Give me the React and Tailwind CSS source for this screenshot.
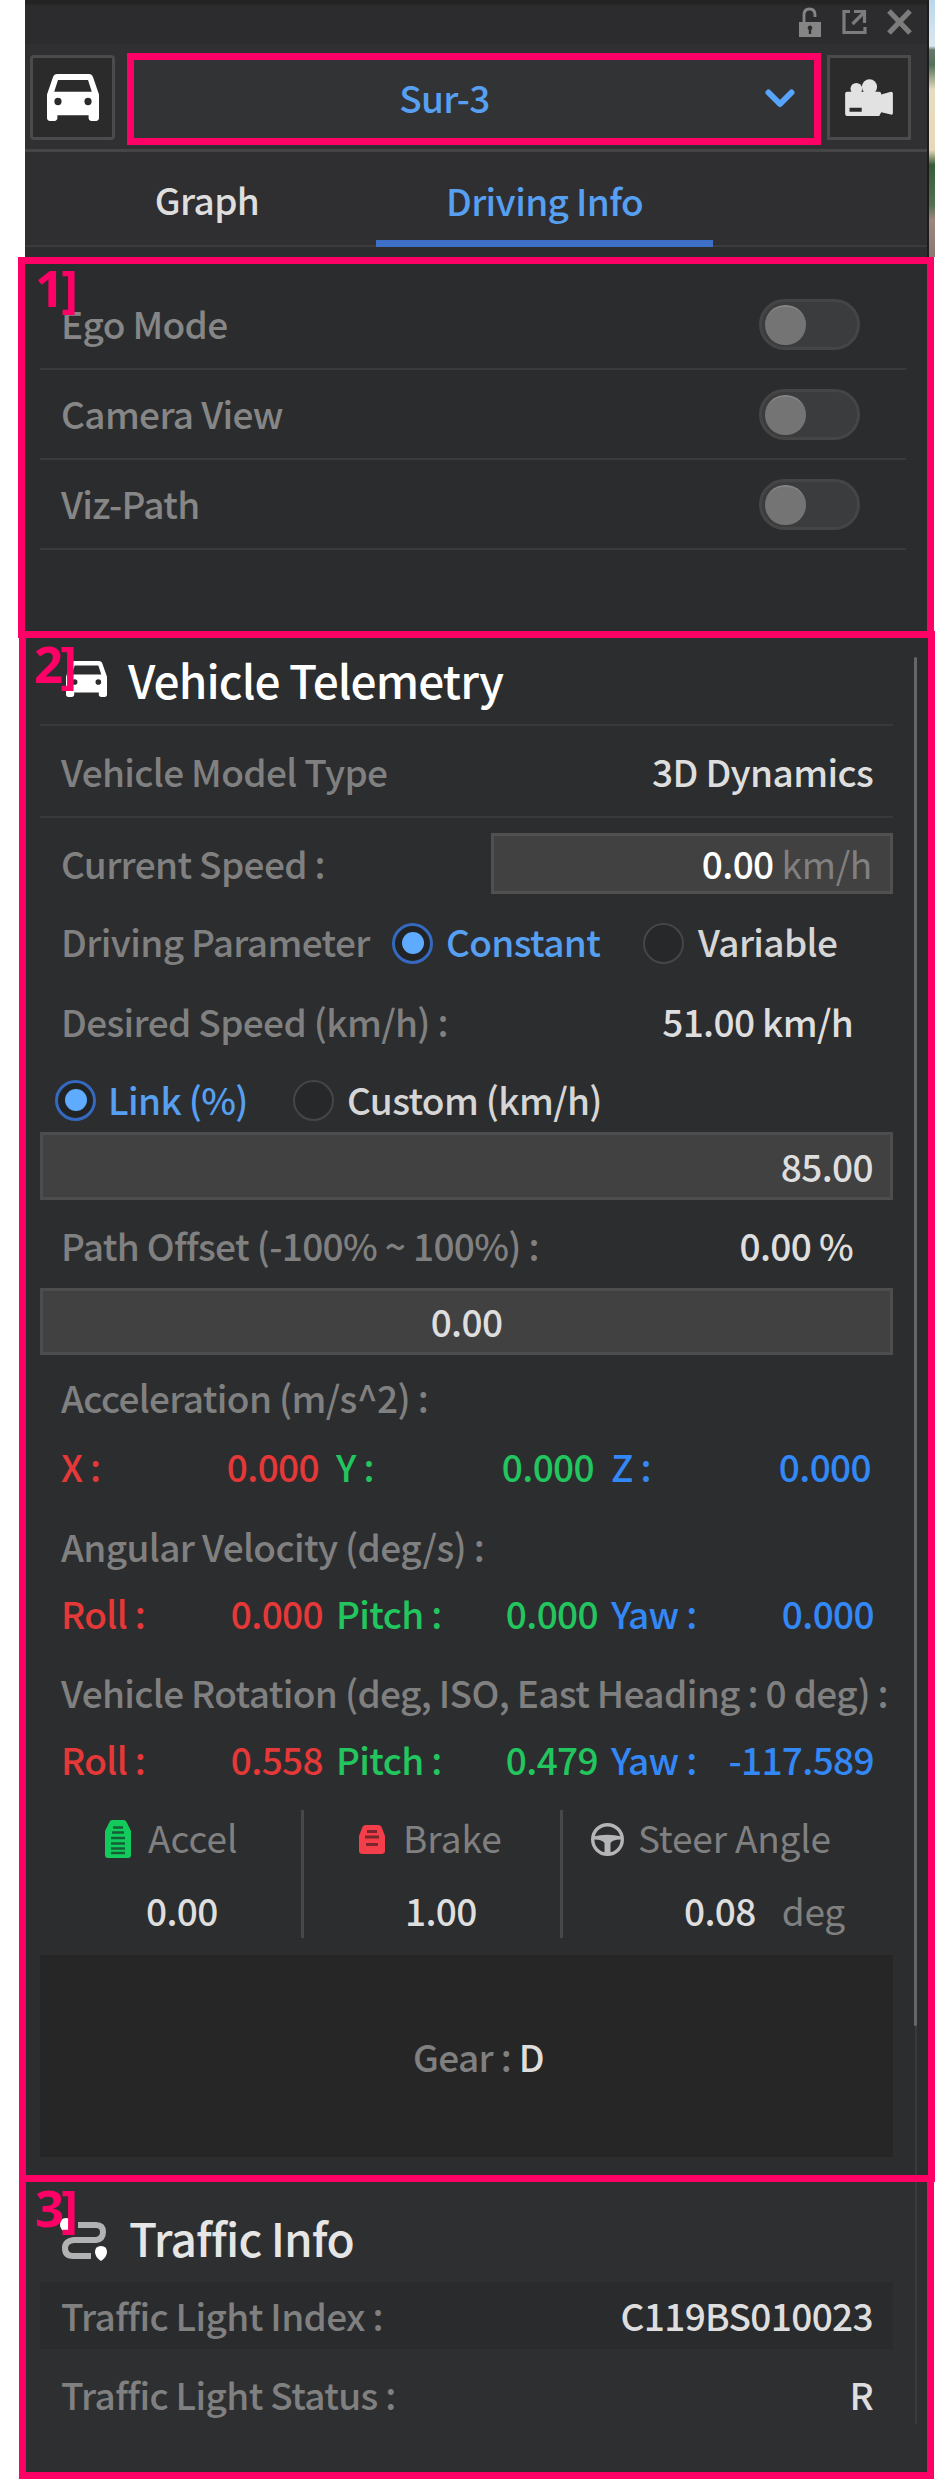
const F = "font-['Noto_Sans_CJK_KR','Noto_Sans_CJK_JP',sans-serif]";

function T({ className = "", children }) {
  return <span className={`whitespace-pre pb-[4px] leading-[48px] ${className}`}>{children}</span>;
}

function Car({ className }) {
  return (
    <svg className={className} viewBox="3 5 18 16" preserveAspectRatio="none" fill="currentColor">
      <path fillRule="evenodd" d="M18.92 6.01C18.72 5.42 18.16 5 17.5 5h-11c-.66 0-1.21.42-1.42 1.01L3 12v8c0 .55.45 1 1 1h1.600c.55 0 1-.45 1-1v-1h10.800v1c0 .55.45 1 1 1h1.600c.55 0 1-.45 1-1v-8l-2.08-5.99zM6.8 15.600a1.250 1.250 0 1 1 0-2.500 1.250 1.250 0 0 1 0 2.500zm10.400 0a1.250 1.250 0 1 1 0-2.500 1.250 1.250 0 0 1 0 2.500zM5.500 11l1.300-4h10.400L18.500 11H5.500z" />
    </svg>
  );
}

function Camera({ className }) {
  return (
    <svg className={className} viewBox="0 0 50 39" fill="currentColor">
      <circle cx="25" cy="8" r="7.800" />
      <circle cx="11.500" cy="10" r="6" />
      <path fillRule="evenodd" d="M2 13H35Q37 13 37 16L47 13Q49 13 49 15V35Q49 37 47 36.500L37 34L35 38H2Q0 38 0 36V15Q0 13 2 13ZM4.500 29.500V33.500H17V29.500Z" />
    </svg>
  );
}

function Unlock() {
  return (
    <svg className="h-[31px] w-[24px]" viewBox="0 0 24 31">
      <path d="M6 16V8Q6 2 11.500 2Q17 2 17 8V10" fill="none" stroke="#858585" strokeWidth="2.800" />
      <path fillRule="evenodd" fill="#858585" d="M1 15H23V30H1ZM12 18.500a2.500 2.500 0 0 0-1.200 4.600V27h2.400V23.100a2.500 2.500 0 0 0-1.200-4.600Z" />
    </svg>
  );
}

function External() {
  return (
    <svg className="h-[26px] w-[25px]" viewBox="0 0 25 26" fill="none" stroke="#7c7c7c" strokeWidth="3.200">
      <path d="M8 2.500H2V23.500H23V18M12 2.500H22.500V14M22 3.500L10.500 15" />
    </svg>
  );
}

function Close() {
  return (
    <svg className="h-[26px] w-[25px]" viewBox="0 0 25 26" fill="none" stroke="#7c7c7c" strokeWidth="5.200">
      <path d="M2 2L23 24M23 2L2 24" />
    </svg>
  );
}

function Wheel() {
  return (
    <svg className="h-[35px] w-[35px]" viewBox="0 0 35 35" fill="none" stroke="#b5b5b7">
      <circle cx="17.500" cy="17.500" r="14.800" strokeWidth="3.400" />
      <path d="M3 14.500Q17 11 32 14.500V17.500Q23 17 20.500 21V32H14.500V21Q12 17 3 17.500Z" fill="#b5b5b7" stroke="none" />
    </svg>
  );
}

function AccelIcon() {
  return (
    <svg className="h-[40px] w-[28px]" viewBox="0 0 28 40">
      <path fill="#13cb5c" d="M8 1H20Q22 1 23 4L27 12V36Q27 39 24 39H4Q1 39 1 36V12L5 4Q6 1 8 1Z" />
      <path stroke="#155f36" strokeWidth="2.600" d="M9 8.500H19M8 13.500H20M7 19H21M7 24.500H21M7 29.500H21M7 34H21" />
    </svg>
  );
}

function BrakeIcon() {
  return (
    <svg className="h-[31px] w-[28px]" viewBox="0 0 28 31">
      <path fill="#f43f4b" d="M8 1H20Q23 1 24 4L27 12V27Q27 30 23 30H5Q1 30 1 27V12L4 4Q5 1 8 1Z" />
      <path stroke="#79262c" strokeWidth="3" d="M9 7.500H19M7 13H21M8 20.500H20" />
    </svg>
  );
}

function Route() {
  return (
    <svg className="h-[48px] w-[50px]" viewBox="0 0 50 48">
      <path d="M18 10H36Q43 10 43 17Q43 24 36 25H14Q5 26 5 33Q5 41 13 41H31" fill="none" stroke="#b2b2b2" strokeWidth="6" />
      <path fill="#fff" d="M0 10Q0 3 6 3Q12 3 12 10Q12 14 6 19Q0 14 0 10ZM35 37Q35 31 41 31Q47 31 47 37Q47 42 41 46Q35 42 35 37Z" />
    </svg>
  );
}

function Toggle() {
  return (
    <span className="flex h-[51px] w-[101px] items-center rounded-full border-[3px] border-[#454546] bg-[#3b3c3d] pl-[3px]">
      <span className="h-[40px] w-[41px] rounded-full border-t-2 border-[#858585] bg-[#747474]" />
    </span>
  );
}

function Radio({ on }) {
  return on ? (
    <span className="flex h-[41px] w-[41px] shrink-0 items-center justify-center rounded-full border-[3px] border-[#3469bf] bg-[#222324]">
      <span className="h-[22px] w-[22px] rounded-full bg-[#5eabff]" />
    </span>
  ) : (
    <span className="h-[41px] w-[41px] shrink-0 rounded-full border-2 border-[#464647] bg-[#272829]" />
  );
}

function Mark({ children, className = "" }) {
  return (
    <span className={`absolute z-10 font-['Noto_Sans','Open_Sans',sans-serif] text-[51px] leading-[52px] font-bold tracking-[-3px] text-[#ff0066] ${className}`}>
      {children}
    </span>
  );
}

function Axes({ items, right = "w-[813px]", gap = "pr-[13px]", className = "" }) {
  return (
    <div className={`ml-[21px] grid h-[50px] grid-cols-[275px_275px_1fr] items-center ${right} ${className}`}>
      <div className={`flex justify-between text-[#e53838] ${gap}`}><T>{items[0][0]}</T><T>{items[0][1]}</T></div>
      <div className={`flex justify-between text-[#22c55e] ${gap}`}><T>{items[1][0]}</T><T>{items[1][1]}</T></div>
      <div className="flex justify-between text-[#3388f6]"><T>{items[2][0]}</T><T>{items[2][1]}</T></div>
    </div>
  );
}

const toggles = ["Ego Mode", "Camera View", "Viz-Path"];

export default function App() {
  return (
    <div className={`flex h-[2479px] w-[935px] overflow-hidden bg-white text-[37px] font-medium tracking-[-0.65px] text-[#dedede] ${F}`}>
      <div className="relative w-full bg-[linear-gradient(90deg,#fff_25px,#2c2d2f_25px,#2c2d2f_927px,#1d1b1c_927px,#1d1b1c_929px,transparent_929px)]">
        <div className="absolute top-0 right-0 h-[257px] w-[6px] bg-[linear-gradient(180deg,#b9d7ec_0,#dbe8f0_46px,#68756b_50px,#51715a_65px,#e7dcc0_90px,#e7d9b6_150px,#365b38_165px,#527150_205px,#9b8780_220px,#8c7772_257px)]" />

        <header className="mr-[8px] ml-[25px] flex h-[44px] items-center justify-end bg-gradient-to-b from-[#242324] from-[3px] to-[#2c2c2e] to-[6px] pr-[15px]">
          <div className="flex items-center gap-[20px]">
            <Unlock /><External /><Close />
          </div>
        </header>
        <div className="mr-[8px] ml-[25px] flex h-[108px] border-b-[3px] border-[#454546] bg-[#303032] pt-[9px] pl-[5px]">
          <div className="mt-[2px] flex h-[85px] w-[85px] items-center justify-center rounded-[4px] border-[3px] border-[#4b4b4b] bg-[#2b2b2c] text-white">
            <Car className="h-[47px] w-[52px]" />
          </div>
          <div className="ml-[12px] flex h-[92px] w-[694px] items-center border-7 border-[#ff0066] bg-[#323335] text-[#579ff0]">
            <T className="w-[621px] text-center">Sur-3</T>
            <svg className="ml-[10px] h-[20px] w-[30px]" viewBox="0 0 30 20"><path d="M3.500 3.500L15 15L26.500 3.500" fill="none" stroke="#57a5fa" strokeWidth="6" strokeLinecap="round" strokeLinejoin="round" /></svg>
          </div>
          <div className="mt-[2px] ml-[6px] flex h-[85px] w-[84px] items-center justify-center border-[3px] border-[#4b4b4b] bg-[#2b2b2c] text-[#e2e2e2]">
            <Camera className="h-[38px] w-[49px]" />
          </div>
        </div>
        <nav className="mr-[8px] ml-[25px] flex h-[95px] border-b-2 border-[#3b3b3c] bg-[#2f2f31]">
          <div className="flex h-full w-[351px] items-center justify-center pt-[4px] pl-[13px]"><T>Graph</T></div>
          <div className="flex h-[95px] w-[337px] items-center justify-center border-b-7 border-[#3e70c7] pt-[11px] text-[#579ff0]"><T>Driving Info</T></div>
        </nav>

        <section className="relative mt-[10px] ml-[18px] h-[381px] w-[916px] border-7 border-[#ff0066] bg-[#2b2c2d] pt-[16px]">
          <Mark className="top-[-3px] left-[10px]">1]</Mark>
          {toggles.map((t) => (
            <div key={t} className="mr-[21px] ml-[15px] flex h-[90px] items-center justify-between border-b-2 border-[#3a3b3c] pt-[1px] pr-[46px] pl-[21px] text-[#868686]">
              <T>{t}</T>
              <Toggle />
            </div>
          ))}
        </section>

        <section className="relative -mt-[7px] ml-[19px] h-[1551px] w-[916px] border-7 border-[#ff0066] bg-[#2c2d2f] pl-[14px]">
          <Mark className="top-[-1px] left-[8px]">2]</Mark>
          <div className="absolute top-[19px] right-[11px] h-[1369px] w-[3px] rounded bg-[#666667]" />
          <div className="absolute top-[1388px] right-[11px] bottom-0 w-[2px] bg-[#3a3a3b]" />
          <div className="flex w-[853px] flex-col text-[#808080]">
            <div className="flex h-[88px] items-center border-b-2 border-[#383939] pl-[26px] text-white">
              <Car className="mb-[5px] h-[36px] w-[41px]" />
              <T className="ml-[21px] text-[46px] tracking-[-0.9px]">Vehicle Telemetry</T>
            </div>
            <div className="flex h-[92px] items-center justify-between border-b-2 border-[#383939] pt-[4px] pr-[20px] pl-[21px]">
              <T>Vehicle Model Type</T>
              <T className="text-[#dedede]">3D Dynamics</T>
            </div>
            <div className="mt-[15px] flex h-[61px] items-center justify-between pl-[21px]">
              <T className="pt-[2px]">Current Speed :</T>
              <div className="flex h-[61px] w-[402px] items-center justify-end border-[3px] border-[#505050] bg-[#414141] pt-[3px] pr-[18px]">
                <T className="text-white">0.00</T>
                <T className="font-normal tracking-[-0.3px]"> km/h</T>
              </div>
            </div>
            <div className="mt-[24px] flex h-[50px] items-center pl-[21px]">
              <T className="w-[331px]">Driving Parameter</T>
              <Radio on />
              <T className="ml-[13px] w-[197px] text-[#579ff0]">Constant</T>
              <Radio />
              <T className="ml-[14px] text-[#d6d6d6]">Variable</T>
            </div>
            <div className="mt-[30px] flex h-[50px] items-center justify-between pr-[40px] pl-[21px]">
              <T>Desired Speed (km/h) :</T>
              <T className="text-[#dedede]">51.00 km/h</T>
            </div>
            <div className="mt-[27px] flex h-[50px] items-center pl-[15px]">
              <Radio on />
              <T className="ml-[12px] w-[185px] pt-[2px] text-[#579ff0]">Link (%)</T>
              <Radio />
              <T className="ml-[13px] pt-[2px] text-[#d6d6d6]">Custom (km/h)</T>
            </div>
            <div className="mt-[7px] flex h-[68px] items-center justify-end border-[3px] border-[#4d4d4d] bg-[#414142] pt-[3px] pr-[17px] text-[#dedede]"><T>85.00</T></div>
            <div className="mt-[22px] flex h-[50px] items-center justify-between pr-[40px] pl-[21px]">
              <T>Path Offset (-100% ~ 100%) :</T>
              <T className="text-[#dedede]">0.00 %</T>
            </div>
            <div className="mt-[16px] flex h-[67px] items-center justify-center border-[3px] border-[#4d4d4d] bg-[#414142] pt-[2px] text-[#dedede]"><T>0.00</T></div>
            <div className="mt-[19px] flex h-[50px] items-center pl-[21px]"><T>Acceleration (m/s^2) :</T></div>
            <Axes className="mt-[18px]" right="w-[810px]" gap="pr-[17px]" items={[["X :", "0.000"], ["Y :", "0.000"], ["Z :", "0.000"]]} />
            <div className="mt-[31px] flex h-[50px] items-center pl-[21px]"><T>Angular Velocity (deg/s) :</T></div>
            <Axes className="mt-[16px]" items={[["Roll :", "0.000"], ["Pitch :", "0.000"], ["Yaw :", "0.000"]]} />
            <div className="mt-[30px] flex h-[50px] items-center pl-[21px]"><T>Vehicle Rotation (deg, ISO, East Heading : 0 deg) :</T></div>
            <Axes className="mt-[16px]" items={[["Roll :", "0.558"], ["Pitch :", "0.479"], ["Yaw :", "-117.589"]]} />
            <div className="mt-[25px] grid h-[128px] grid-cols-[264px_259px_330px] font-normal">
              <div className="border-r-[3px] border-[#484849]">
                <div className="flex h-[58px] items-center pl-[64px]"><AccelIcon /><T className="ml-[16px] tracking-[0px]">Accel</T></div>
                <div className="mt-[19px] flex h-[50px] items-center pl-[106px] font-medium text-[#dedede]"><T>0.00</T></div>
              </div>
              <div className="border-r-[3px] border-[#484849]">
                <div className="flex h-[58px] items-center pl-[54px]"><BrakeIcon /><T className="ml-[17px] tracking-[0px]">Brake</T></div>
                <div className="mt-[19px] flex h-[50px] items-center pl-[101px] font-medium text-[#dedede]"><T>1.00</T></div>
              </div>
              <div>
                <div className="flex h-[58px] items-center pl-[27px]"><Wheel /><T className="ml-[13px] tracking-[-0.2px]">Steer Angle</T></div>
                <div className="mt-[19px] flex h-[50px] items-center pl-[121px]"><T className="font-medium text-[#dedede]">0.08</T><T className="ml-[26px] tracking-[-0.2px]">deg</T></div>
              </div>
            </div>
            <div className="mt-[17px] flex h-[202px] items-center justify-center bg-[#272627] pt-[4px] pl-[24px]">
              <T>Gear : </T><T className="text-[#dedede]">D</T>
            </div>
          </div>
        </section>

        <section className="relative -mt-[7px] ml-[19px] h-[304px] w-[915px] border-7 border-[#ff0066] bg-[#2e2f31] pl-[14px]">
          <Mark className="top-[-1px] left-[9px]">3]</Mark>
          <div className="absolute top-0 right-[10px] h-[242px] w-[2px] bg-[#3a3a3b]" />
          <div className="flex w-[853px] flex-col text-[#808080]">
            <div className="flex h-[100px] items-center pt-[13px] pl-[20px] text-[#e6e6e6]">
              <Route />
              <T className="ml-[19px] text-[46px] tracking-[-0.9px]">Traffic Info</T>
            </div>
            <div className="flex h-[67px] items-center justify-between bg-[#2a2b2d] pt-[2px] pr-[20px] pl-[21px]">
              <T>Traffic Light Index :</T>
              <T className="text-[#dedede]">C119BS010023</T>
            </div>
            <div className="mt-[12px] flex h-[67px] items-center justify-between pt-[2px] pr-[20px] pl-[21px]">
              <T>Traffic Light Status :</T>
              <T className="text-[#dedede]">R</T>
            </div>
          </div>
        </section>
      </div>
    </div>
  );
}
